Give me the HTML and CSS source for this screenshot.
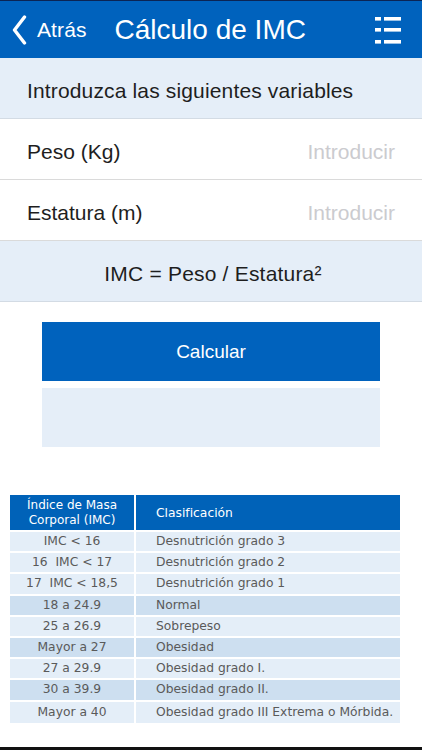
FILE: index.html
```html
<!DOCTYPE html>
<html lang="es">
<head>
<meta charset="utf-8">
<title>Cálculo de IMC</title>
<link rel="stylesheet" href="styles.css">
</head>
<body>
<div class="screen">
  <header class="navbar">
    <div class="back">
      <svg class="chevron" width="16" height="30" viewBox="0 0 16 30"><path d="M12.5 2 L2.5 15 L12.5 28" fill="none" stroke="#fff" stroke-width="3.4" stroke-linecap="round" stroke-linejoin="round"/></svg>
      <span class="back-label">Atrás</span>
    </div>
    <h1 class="title">Cálculo de IMC</h1>
    <svg class="menu" width="27" height="28" viewBox="0 0 27 28">
      <rect x="0" y="1" width="6" height="3.6" fill="#fff"/>
      <rect x="9" y="1" width="17" height="3.6" fill="#fff"/>
      <rect x="0" y="12" width="6" height="3.6" fill="#fff"/>
      <rect x="9" y="12" width="17" height="3.6" fill="#fff"/>
      <rect x="0" y="24" width="6" height="3.6" fill="#fff"/>
      <rect x="9" y="24" width="17" height="3.6" fill="#fff"/>
    </svg>
  </header>

  <div class="band">Introduzca las siguientes variables</div>
  <div class="field"><span class="label">Peso (Kg)</span><span class="placeholder">Introducir</span></div>
  <div class="field"><span class="label">Estatura (m)</span><span class="placeholder">Introducir</span></div>
  <div class="band formula">IMC = Peso / Estatura²</div>

  <div class="actions">
    <div class="btn">Calcular</div>
    <div class="result"></div>
  </div>

  <table class="imc">
    <thead>
      <tr><th class="c1">Índice de Masa<br>Corporal (IMC)</th><th class="c2">Clasificación</th></tr>
    </thead>
    <tbody>
      <tr class="lt"><td class="c1">IMC &lt; 16</td><td class="c2">Desnutrición grado 3</td></tr>
      <tr class="lt"><td class="c1">16&nbsp; IMC &lt; 17</td><td class="c2">Desnutrición grado 2</td></tr>
      <tr class="lt"><td class="c1">17&nbsp; IMC &lt; 18,5</td><td class="c2">Desnutrición grado 1</td></tr>
      <tr class="dk"><td class="c1">18 a 24.9</td><td class="c2">Normal</td></tr>
      <tr class="lt"><td class="c1">25 a 26.9</td><td class="c2">Sobrepeso</td></tr>
      <tr class="dk"><td class="c1">Mayor a 27</td><td class="c2">Obesidad</td></tr>
      <tr class="lt"><td class="c1">27 a 29.9</td><td class="c2">Obesidad grado I.</td></tr>
      <tr class="dk"><td class="c1">30 a 39.9</td><td class="c2">Obesidad grado II.</td></tr>
      <tr class="lt"><td class="c1">Mayor a 40</td><td class="c2">Obesidad grado III Extrema o Mórbida.</td></tr>
    </tbody>
  </table>

  <div class="bottom-bar"></div>
</div>
</body>
</html>
```

FILE: styles.css
```css
* { box-sizing: border-box; }
html, body { margin: 0; padding: 0; background: #fff; }
body { font-family: "Liberation Sans", Arial, sans-serif; color: #1e1e1e; }

.screen {
  width: 422px;
  height: 750px;
  display: flex;
  flex-direction: column;
  overflow: hidden;
}

.navbar {
  height: 58px;
  flex: none;
  background: #0062bd;
  border-top: 1px solid #0b2454;
  display: flex;
  align-items: center;
  padding: 0 20px 0 12px;
  color: #fff;
}
.back { display: flex; align-items: center; gap: 9px; margin-top: 1px; }
.chevron { display: block; }
.back-label { font-size: 21px; letter-spacing: 0.1px; }
.title {
  margin: 0 0 0 28px;
  font-size: 28px;
  font-weight: normal;
  flex: 1;
  letter-spacing: 0;
}
.menu { display: block; margin-top: 1px; }

.band {
  height: 61px;
  flex: none;
  background: #e5eef8;
  border-bottom: 1px solid #d3dbe4;
  display: flex;
  align-items: center;
  padding: 6px 0 0 27px;
  font-size: 21px;
  letter-spacing: 0.15px;
}
.formula { justify-content: center; padding: 6px 0 0 4px; letter-spacing: 0.2px; }

.field {
  height: 61px;
  flex: none;
  border-bottom: 1px solid #dadada;
  display: flex;
  align-items: center;
  justify-content: space-between;
  padding: 6px 27px 0 27px;
  font-size: 21px;
}
.placeholder { color: #cbcbcf; font-size: 21px; }

.actions {
  padding: 20px 42px 0 42px;
  display: flex;
  flex-direction: column;
  gap: 7px;
  flex: none;
}
.btn {
  height: 59px;
  background: #0062bd;
  color: #fff;
  font-size: 19px;
  display: flex;
  align-items: center;
  justify-content: center;
  padding-top: 1px;
}
.result { height: 59px; background: #e5eef8; }

.imc {
  margin: 48px 0 0 10px;
  width: 390px;
  border-collapse: separate;
  border-spacing: 0;
  font-family: "DejaVu Sans", Verdana, sans-serif;
  font-size: 12.3px;
  color: #5a5a5a;
  flex: none;
}
.imc th, .imc td { padding: 0; border-bottom: 2px solid #fff; }
.imc .c1 { width: 126px; text-align: center; border-right: 2px solid #fff; }
.imc .c2 { text-align: left; padding-left: 20px; }
.imc th {
  background: #0062b8;
  color: #fff;
  font-weight: normal;
  height: 37px;
  line-height: 15px;
  padding-top: 1px;
}
.imc th.c1 { padding-top: 0; font-size: 12px; }
.imc td { height: 21.2px; line-height: 19px; }
.imc tr.lt td { background: #e4eef8; }
.imc tr.dk td { background: #cddff0; }
.imc tbody tr:last-child td { border-bottom: none; }

.bottom-bar {
  margin-top: auto;
  height: 3px;
  background: #111;
  flex: none;
}
```
